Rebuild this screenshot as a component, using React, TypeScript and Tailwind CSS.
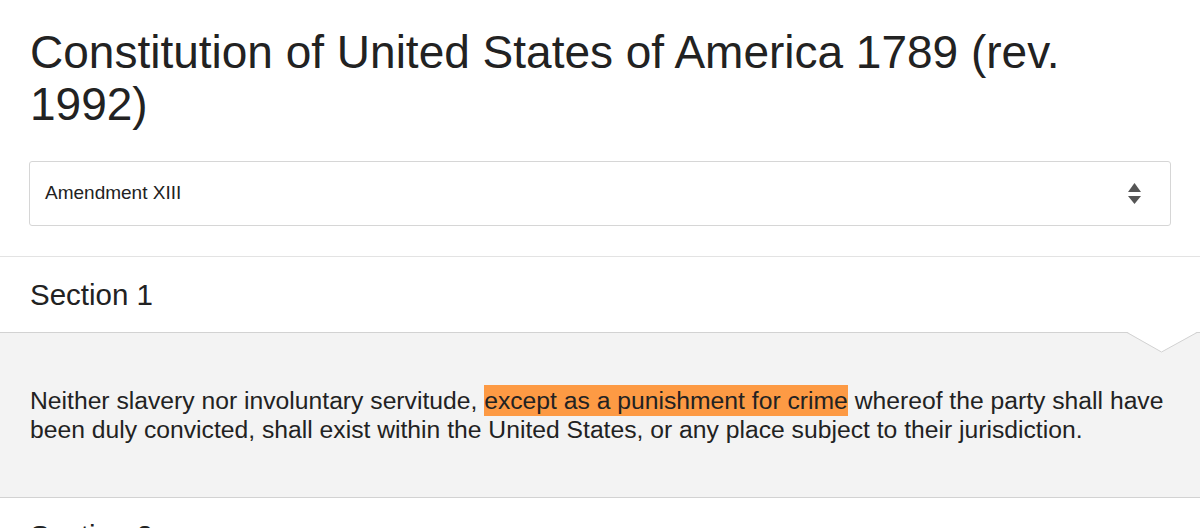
import React from 'react';

const SelectArrows = () => (
  <svg width="13" height="21" viewBox="0 0 13 21" fill="#555">
    <path d="M6.5 0 L13 9 L0 9 Z" />
    <path d="M0 13 L13 13 L6.5 21 Z" />
  </svg>
);

const App = () => {
  return (
    <div className="w-[1200px] h-[528px] overflow-hidden bg-white text-[#222] [font-family:'Liberation_Sans',Arial,sans-serif]">
      <h1 className="px-[30px] pt-[26px] text-[46px] leading-[52px] font-normal">
        Constitution of United States of America 1789 (rev. 1992)
      </h1>

      <div className="mx-[29px] mt-[31px] h-[65px] flex items-center justify-between border border-[#d6d6d6] rounded-[3px] pl-[15px] pr-[29px]">
        <span className="text-[19px]">Amendment XIII</span>
        <SelectArrows />
      </div>

      <div className="mt-[30px] border-t border-[#e3e3e3]">
        {/* Section 1 */}
        <div className="h-[75px] flex items-center px-[30px]">
          <h2 className="text-[29.5px] pt-[2px]">Section 1</h2>
        </div>
        <div className="relative bg-[#f3f3f3] border-t border-b border-[#d2d2d2] pt-[53px] pb-[53px] px-[30px]">
          <svg className="absolute right-[3px] top-[-1px]" width="70" height="21" viewBox="0 0 70 21">
            <polygon points="0,0 34.5,20 70,0" fill="#fff" />
            <polyline points="0,0.5 34.5,20 70,0.5" fill="none" stroke="#d2d2d2" strokeWidth="1" />
          </svg>
          <p className="text-[24.7px] leading-[29px]">
            Neither slavery nor involuntary servitude,{' '}
            <span className="bg-[#fd9a44] py-[2px]">except as a punishment for crime</span> whereof
            the party shall have been duly convicted, shall exist within the United States, or any
            place subject to their jurisdiction.
          </p>
        </div>

        {/* Section 2 */}
        <div className="h-[75px] flex items-center px-[30px]">
          <h2 className="text-[29.5px] pt-[2px]">Section 2</h2>
        </div>
      </div>
    </div>
  );
};

export default App;
